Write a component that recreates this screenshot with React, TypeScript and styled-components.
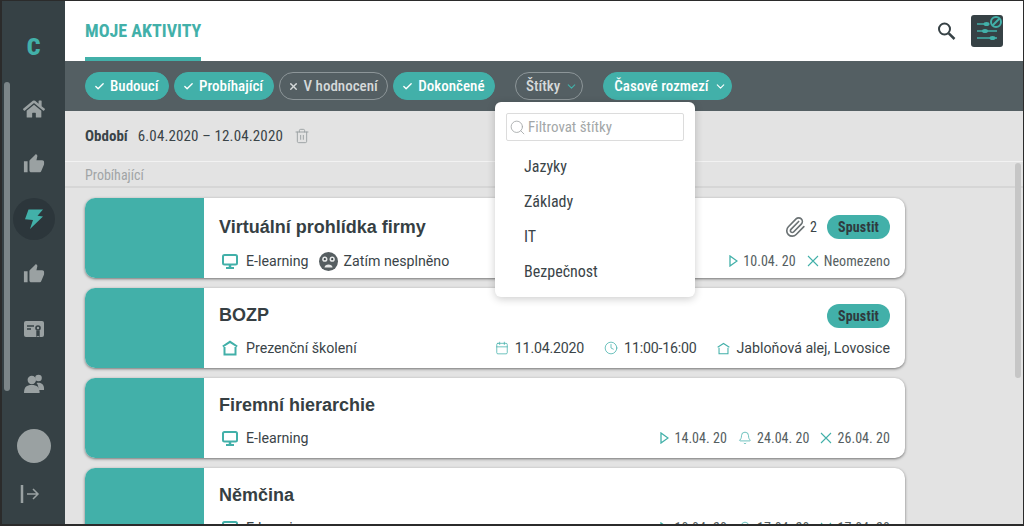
import { createGlobalStyle, styled } from 'styled-components'
import { FaHome } from 'react-icons/fa'
import { MdThumbUp } from 'react-icons/md'
import { Search, Trash2, Paperclip, Calendar, Clock, Bell, Check, X, ChevronDown } from 'lucide-react'

const teal = '#42b0a9'
const dark = '#364145'
const condensed = `"Roboto Condensed", Roboto, sans-serif`

const GlobalStyle = createGlobalStyle`
  html, body { margin: 0; padding: 0; overflow: hidden; }
  body { font-family: Roboto, sans-serif; color: #3a4448; }
  * { box-sizing: border-box; }
`

const Frame = styled.div`
  position: relative;
  display: flex;
  width: 1024px;
  height: 526px;
  overflow: hidden;
  background: #e3e3e3;
  border: 1px solid #2b2b2b;
  border-left-width: 2px;
  border-bottom-width: 2px;
`

const Sidebar = styled.nav`
  position: relative;
  flex: 0 0 63px;
  display: flex;
  flex-direction: column;
  align-items: center;
  background: ${dark};
`

const SideScroll = styled.div`
  position: absolute;
  left: 2px;
  top: 81px;
  width: 6px;
  height: 309px;
  border-radius: 3px;
  background: #7c8588;
`

const Logo = styled.div`
  height: 55px;
  margin-top: 25px;
  font: 900 24px/42px ${condensed};
  font-stretch: 75%;
  color: ${teal};
`

const SideItem = styled.div<{ $active?: boolean }>`
  flex: 0 0 55px;
  width: 42px;
  height: 55px;
  display: flex;
  align-items: center;
  justify-content: center;
  color: #9aa1a2;
  position: relative;
  ${p => p.$active && `
    color: ${teal};
    &::before {
      content: '';
      position: absolute;
      left: 0; top: 6.5px;
      width: 42px; height: 42px;
      border-radius: 50%;
      background: #2c363b;
    }
    & > svg { position: relative; }
  `}
`

const Avatar = styled.div`
  width: 34px;
  height: 34px;
  margin-top: 18px;
  border-radius: 50%;
  background: #9aa1a2;
`

const Logout = styled.div`
  margin-top: 22px;
  margin-right: 7px;
  color: #9aa1a2;
  line-height: 0;
`

const Main = styled.main`
  position: relative;
  flex: 1;
  min-width: 0;
  display: flex;
  flex-direction: column;
`

const Header = styled.header`
  flex: 0 0 60px;
  display: flex;
  align-items: flex-start;
  justify-content: space-between;
  background: #fff;
  padding: 0 20px;
`

const Title = styled.h1`
  margin: 0;
  height: 60px;
  padding-top: 18px;
  border-bottom: 4px solid ${teal};
  font: 700 18px/24px ${condensed};
  font-stretch: 75%;
  color: ${teal};
`

const HeaderTools = styled.div`
  display: flex;
  align-items: center;
  gap: 15px;
  height: 60px;
  color: ${dark};
`

const FilterButton = styled.div`
  width: 32px;
  height: 32px;
  border-radius: 3px;
  background: ${dark};
  line-height: 0;
`

const FilterBar = styled.div`
  flex: 0 0 50px;
  display: flex;
  align-items: center;
  padding-left: 20px;
  gap: 5px;
  background: #545f63;
`

const Chip = styled.div<{ $on?: boolean }>`
  height: 28px;
  display: flex;
  align-items: center;
  gap: 5px;
  padding: 0 9.5px 0 8px;
  border-radius: 14px;
  border: 1px solid ${p => (p.$on ? teal : '#8d9699')};
  background: ${p => (p.$on ? teal : 'transparent')};
  color: ${p => (p.$on ? '#fff' : '#d5d9da')};
  font: 500 15px/1 ${condensed};
  font-stretch: 75%;
  white-space: nowrap;
`

const MenuChip = styled(Chip)`
  margin-left: 15px;
  padding: 0 4px 0 10px;
`

const PeriodBar = styled.div`
  flex: 0 0 51px;
  display: flex;
  align-items: center;
  padding-left: 20px;
  gap: 10px;
  font: 400 15px/1 ${condensed};
  font-stretch: 75%;
  color: #3a4448;
  border-bottom: 1px solid #f2f2f2;
`

const PeriodLabel = styled.b`
  font-weight: 700;
`

const PeriodDates = styled.span`
  letter-spacing: 0.13px;
`

const PeriodIcon = styled.span`
  margin-left: 1px;
  color: #999fa1;
  line-height: 0;
`

const SectionLabel = styled.div`
  flex: 0 0 26px;
  padding: 5px 0 0 20px;
  font: 400 14px/16px ${condensed};
  font-stretch: 75%;
  color: #a1a5a6;
  border-bottom: 2px solid #d6d6d6;
`

const List = styled.div`
  flex: 1;
  display: flex;
  flex-direction: column;
  gap: 10px;
  padding: 10px 0 0 20px;
  overflow: hidden;
`

const ListScroll = styled.div`
  position: absolute;
  right: 2px;
  top: 162px;
  width: 6px;
  height: 215px;
  border-radius: 3px;
  background: #c6c6c6;
`

const Card = styled.article`
  flex: 0 0 80px;
  width: 820px;
  display: flex;
  border-radius: 10px;
  overflow: hidden;
  background: #fff;
  box-shadow: 0 1px 3px rgba(0, 0, 0, 0.5);
`

const Thumb = styled.div`
  flex: 0 0 119px;
  background: ${teal};
`

const CardBody = styled.div<{ $top: number }>`
  flex: 1;
  min-width: 0;
  display: flex;
  flex-direction: column;
  padding: ${p => p.$top}px 15px 0;
`

const TopRow = styled.div`
  height: 24px;
  display: flex;
  align-items: center;
  justify-content: space-between;
`

const CardTitle = styled.h2<{ $lift?: boolean }>`
  margin: 0 0 ${p => (p.$lift ? 2 : 0)}px;
  font: 700 18px/24px "Liberation Sans", Arial, sans-serif;
  color: #363f43;
`

const TopRight = styled.div`
  display: flex;
  align-items: center;
  color: #3a4448;
  font: 400 14px/1 ${condensed};
  font-stretch: 75%;
`

const Attachment = styled.span`
  display: flex;
  align-items: center;
  gap: 4px;
  margin-right: 10px;
  color: #6b7274;
`

const AttachmentCount = styled.span`
  color: #3a4448;
`

const StartButton = styled.div`
  width: 63px;
  height: 24px;
  border-radius: 12px;
  background: ${teal};
  color: #2f3a3e;
  text-align: center;
  font: 700 14px/24px ${condensed};
  font-stretch: 75%;
  letter-spacing: 0.2px;
`

const MetaRow = styled.div<{ $gap: number }>`
  margin-top: ${p => p.$gap}px;
  height: 20px;
  display: flex;
  align-items: center;
  justify-content: space-between;
`

const LeftGroup = styled.div`
  display: flex;
  align-items: center;
  gap: 10px;
  padding-left: 3px;
`

const MetaGroup = styled.div<{ $gap: number }>`
  display: flex;
  align-items: center;
  gap: ${p => p.$gap}px;
`

const Meta = styled.span<{ $iconGap?: number; $tight?: boolean }>`
  display: flex;
  align-items: center;
  gap: ${p => p.$iconGap ?? 8}px;
  font: 400 14.2px/20px Roboto, sans-serif;
  letter-spacing: ${p => (p.$tight ? '-0.2px' : '0')};
  color: #3a4448;
  white-space: nowrap;
`

const TealIcon = styled.span`
  display: flex;
  color: ${teal};
`

const DateMeta = styled.span`
  display: flex;
  align-items: center;
  gap: 5px;
  font: 400 14px/20px ${condensed};
  font-stretch: 75%;
  letter-spacing: 0.05px;
  color: #555e61;
  white-space: nowrap;
`

const Dropdown = styled.div`
  position: absolute;
  left: 430px;
  top: 101px;
  width: 200px;
  height: 195px;
  padding: 11px;
  background: #fff;
  border-radius: 6px;
  box-shadow: 0 2px 8px rgba(0, 0, 0, 0.2);
`

const FilterInput = styled.div`
  height: 28px;
  display: flex;
  align-items: center;
  gap: 2px;
  padding-left: 2px;
  border: 1px solid #dcdcdc;
  border-radius: 2px;
  color: #a3a7a8;
  font: 400 15px/1 ${condensed};
  font-stretch: 75%;
`

const TagList = styled.ul`
  list-style: none;
  margin: 8px 0 0;
  padding: 0 0 0 18px;
`

const Tag = styled.li`
  height: 35px;
  font: 400 16px/35px ${condensed};
  font-stretch: 75%;
  color: #3a4448;
`

const HouseIcon = ({ size, weight }: { size: number; weight: number }) => (
  <svg width={size} height={size} viewBox="0 0 16 16" fill="none" stroke="currentColor" strokeWidth={weight}>
    <path d="M.8 6.500 8 1.800l7.200 4.700" />
    <path d="M2.500 7v7.500h11V7" />
  </svg>
)

const MonitorIcon = () => (
  <TealIcon>
    <svg width="16" height="15" viewBox="0 0 16 15" fill="none" stroke="currentColor">
      <rect x="1" y="1" width="14" height="9.500" rx="1.500" strokeWidth="2" />
      <path d="M8 11v2.500" strokeWidth="2.500" />
      <path d="M4 14h8" strokeWidth="2" />
    </svg>
  </TealIcon>
)

const PlayIcon = () => (
  <svg width="9" height="12" viewBox="0 0 9 12" fill="none" stroke={teal} strokeWidth="1.300">
    <path d="M1 1v10l7-5z" />
  </svg>
)

const CloseMark = () => (
  <TealIcon>
    <svg width="12" height="12" viewBox="0 0 12 12" fill="none" stroke="currentColor" strokeWidth="1.100">
      <path d="M1 1l10 10M11 1L1 11" />
    </svg>
  </TealIcon>
)

const CertIcon = () => (
  <svg width="20" height="16" viewBox="0 0 20 16">
    <rect width="20" height="16" rx="2" fill="currentColor" />
    <path d="M3 5h7M3 8h4" stroke={dark} strokeWidth="1.300" />
    <circle cx="14" cy="7" r="2.800" fill={dark} />
    <circle cx="14" cy="7" r="1.200" fill="currentColor" />
    <path d="M12.300 9.500h3.400V16L14 14.800 12.300 16z" fill={dark} />
  </svg>
)

const UsersIcon = () => (
  <svg width="20" height="19" viewBox="0 0 20 19" fill="currentColor">
    <circle cx="14.500" cy="4" r="3.300" />
    <path d="M12.500 9c3-1 7.500.5 7.500 5v2h-5.500c0-3-.5-5.500-2-7z" />
    <circle cx="7.800" cy="6" r="4.200" />
    <path d="M0 19c0-6 2.500-8 7.800-8s7.800 2 7.800 8z" />
  </svg>
)

const BoltIcon = () => (
  <svg width="18" height="20" viewBox="0 0 18 20" fill="currentColor">
    <path d="M3.500.5H18l-5.500 6.300L18 7.500 5 20l3-9L0 10.300z" />
  </svg>
)

const LogoutIcon = () => (
  <svg width="20" height="18" viewBox="0 0 20 18" fill="none" stroke="currentColor">
    <path d="M2 0v18" strokeWidth="2.500" />
    <path d="M7 9h11M13 4l5 5-5 5" strokeWidth="1.500" />
  </svg>
)

const HeaderSearchIcon = () => (
  <svg width="18" height="18" viewBox="0 0 18 18" fill="none" stroke="currentColor">
    <circle cx="6.500" cy="7" r="5.500" strokeWidth="2" />
    <path d="M10.800 11.300l5.700 5.700" strokeWidth="2.500" />
  </svg>
)

const FilterOffIcon = () => (
  <svg width="32" height="32" viewBox="0 0 32 32" fill="none" stroke={teal}>
    <path d="M6 9h12M6 16h20M6 23h20" strokeWidth="1.600" />
    <ellipse cx="15.500" cy="9" rx="3" ry="2" fill={teal} stroke="none" />
    <ellipse cx="14" cy="16" rx="3" ry="2" fill={teal} stroke="none" />
    <ellipse cx="21.500" cy="23" rx="3" ry="2" fill={teal} stroke="none" />
    <circle cx="25" cy="7" r="5" strokeWidth="2" />
    <path d="M21.500 10.500l7-7" strokeWidth="2" />
  </svg>
)

const SadFace = () => (
  <svg width="19" height="19" viewBox="0 0 19 19">
    <circle cx="9.500" cy="9.500" r="9.500" fill="#565e61" />
    <circle cx="5.800" cy="7.200" r="2.600" fill="#e6e8e8" />
    <circle cx="13.200" cy="7.200" r="2.600" fill="#e6e8e8" />
    <circle cx="5.800" cy="7.200" r="1.100" fill="#3a4448" />
    <circle cx="13.200" cy="7.200" r="1.100" fill="#3a4448" />
    <path d="M5.500 15.500c0-4 8-4 8 0z" fill="#e6e8e8" />
  </svg>
)

export default function App() {
  return (
    <Frame>
      <GlobalStyle />
      <Sidebar>
        <SideScroll />
        <Logo>C</Logo>
        <SideItem><FaHome size={22} /></SideItem>
        <SideItem><MdThumbUp size={22} /></SideItem>
        <SideItem $active><BoltIcon /></SideItem>
        <SideItem><MdThumbUp size={22} /></SideItem>
        <SideItem><CertIcon /></SideItem>
        <SideItem><UsersIcon /></SideItem>
        <Avatar />
        <Logout><LogoutIcon /></Logout>
      </Sidebar>

      <Main>
        <Header>
          <Title>MOJE AKTIVITY</Title>
          <HeaderTools>
            <HeaderSearchIcon />
            <FilterButton><FilterOffIcon /></FilterButton>
          </HeaderTools>
        </Header>

        <FilterBar>
          <Chip $on><Check size={11} strokeWidth={3} />Budoucí</Chip>
          <Chip $on><Check size={11} strokeWidth={3} />Probíhající</Chip>
          <Chip><X size={11} strokeWidth={3} />V hodnocení</Chip>
          <Chip $on><Check size={11} strokeWidth={3} />Dokončené</Chip>
          <MenuChip>Štítky<TealIcon><ChevronDown size={13} /></TealIcon></MenuChip>
          <MenuChip $on>Časové rozmezí<ChevronDown size={13} /></MenuChip>
        </FilterBar>

        <PeriodBar>
          <PeriodLabel>Období</PeriodLabel>
          <PeriodDates>6.04.2020 – 12.04.2020</PeriodDates>
          <PeriodIcon><Trash2 size={16} strokeWidth={1.4} /></PeriodIcon>
        </PeriodBar>

        <SectionLabel>Probíhající</SectionLabel>

        <List>
          <Card>
            <Thumb />
            <CardBody $top={17}>
              <TopRow>
                <CardTitle>Virtuální prohlídka firmy</CardTitle>
                <TopRight>
                  <Attachment><Paperclip size={22} strokeWidth={1.8} /><AttachmentCount>2</AttachmentCount></Attachment>
                  <StartButton>Spustit</StartButton>
                </TopRight>
              </TopRow>
              <MetaRow $gap={12}>
                <LeftGroup>
                  <Meta><MonitorIcon />E-learning</Meta>
                  <Meta $iconGap={6}><SadFace />Zatím nesplněno</Meta>
                </LeftGroup>
                <MetaGroup $gap={11}>
                  <DateMeta><PlayIcon />10.04. 20</DateMeta>
                  <DateMeta><CloseMark />Neomezeno</DateMeta>
                </MetaGroup>
              </MetaRow>
            </CardBody>
          </Card>

          <Card>
            <Thumb />
            <CardBody $top={16}>
              <TopRow>
                <CardTitle $lift>BOZP</CardTitle>
                <TopRight><StartButton>Spustit</StartButton></TopRight>
              </TopRow>
              <MetaRow $gap={10}>
                <LeftGroup>
                  <Meta><TealIcon><HouseIcon size={16} weight={2} /></TealIcon>Prezenční školení</Meta>
                </LeftGroup>
                <MetaGroup $gap={20}>
                  <Meta $iconGap={6} $tight><TealIcon><Calendar size={14} strokeWidth={1.3} /></TealIcon>11.04.2020</Meta>
                  <Meta $iconGap={6} $tight><TealIcon><Clock size={14} strokeWidth={1.3} /></TealIcon>11:00-16:00</Meta>
                  <Meta $iconGap={7}><TealIcon><HouseIcon size={13} weight={1.3} /></TealIcon>Jabloňová alej, Lovosice</Meta>
                </MetaGroup>
              </MetaRow>
            </CardBody>
          </Card>

          <Card>
            <Thumb />
            <CardBody $top={16}>
              <TopRow>
                <CardTitle $lift>Firemní hierarchie</CardTitle>
              </TopRow>
              <MetaRow $gap={10}>
                <LeftGroup>
                  <Meta><MonitorIcon />E-learning</Meta>
                </LeftGroup>
                <MetaGroup $gap={11}>
                  <DateMeta><PlayIcon />14.04. 20</DateMeta>
                  <DateMeta><TealIcon><Bell size={14} strokeWidth={1.3} /></TealIcon>24.04. 20</DateMeta>
                  <DateMeta><CloseMark />26.04. 20</DateMeta>
                </MetaGroup>
              </MetaRow>
            </CardBody>
          </Card>

          <Card>
            <Thumb />
            <CardBody $top={16}>
              <TopRow>
                <CardTitle $lift>Němčina</CardTitle>
              </TopRow>
              <MetaRow $gap={10}>
                <LeftGroup>
                  <Meta><MonitorIcon />E-learning</Meta>
                </LeftGroup>
                <MetaGroup $gap={11}>
                  <DateMeta><PlayIcon />10.04. 20</DateMeta>
                  <DateMeta><TealIcon><Bell size={14} strokeWidth={1.3} /></TealIcon>17.04. 20</DateMeta>
                  <DateMeta><CloseMark />17.04. 20</DateMeta>
                </MetaGroup>
              </MetaRow>
            </CardBody>
          </Card>
        </List>

        <ListScroll />

        <Dropdown>
          <FilterInput><Search size={17} strokeWidth={1.2} />Filtrovat štítky</FilterInput>
          <TagList>
            <Tag>Jazyky</Tag>
            <Tag>Základy</Tag>
            <Tag>IT</Tag>
            <Tag>Bezpečnost</Tag>
          </TagList>
        </Dropdown>
      </Main>
    </Frame>
  )
}
